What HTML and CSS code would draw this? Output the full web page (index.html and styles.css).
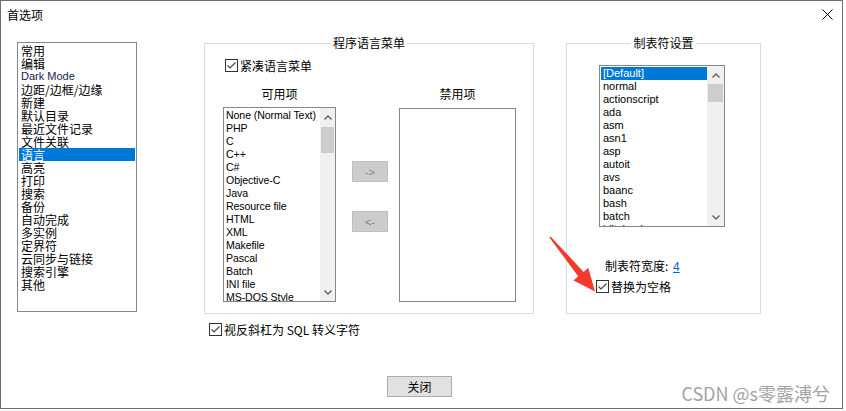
FILE: index.html
```html
<!DOCTYPE html>
<html lang="zh-CN">
<head>
<meta charset="utf-8">
<title>首选项</title>
<link rel="stylesheet" href="styles.css">
</head>
<body>
<div class="window">
  <div class="titlebar">
    <span class="title">首选项</span>
    <svg class="close" width="11" height="11" viewBox="0 0 11 11"><path d="M0.5 0.5 L10.5 10.5 M10.5 0.5 L0.5 10.5" stroke="#000" stroke-width="1"/></svg>
  </div>
  <div class="main">
    <div class="nav">
      <div class="row">常用</div>
      <div class="row">编辑</div>
      <div class="row lat">Dark Mode</div>
      <div class="row">边距/边框/边缘</div>
      <div class="row">新建</div>
      <div class="row">默认目录</div>
      <div class="row">最近文件记录</div>
      <div class="row">文件关联</div>
      <div class="row sel">语言</div>
      <div class="row">高亮</div>
      <div class="row">打印</div>
      <div class="row">搜索</div>
      <div class="row">备份</div>
      <div class="row">自动完成</div>
      <div class="row">多实例</div>
      <div class="row">定界符</div>
      <div class="row">云同步与链接</div>
      <div class="row">搜索引擎</div>
      <div class="row">其他</div>
    </div>

    <div class="midcol">
      <div class="group group-mid">
        <div class="group-title"><span>程序语言菜单</span></div>
        <div class="chk chk-compact">
          <svg class="cb" width="13" height="13" viewBox="0 0 13 13"><rect x="0.5" y="0.5" width="12" height="12" fill="#fff" stroke="#333"/><path d="M2.5 6.5 L5 9 L10.5 3.5" fill="none" stroke="#444" stroke-width="1.2"/></svg>
          <span>紧凑语言菜单</span>
        </div>
        <div class="cols">
          <div class="col col-avail">
            <div class="col-label">可用项</div>
            <div class="list list-avail">
              <div class="items">
                <div class="row">None (Normal Text)</div>
                <div class="row">PHP</div>
                <div class="row">C</div>
                <div class="row">C++</div>
                <div class="row">C#</div>
                <div class="row">Objective-C</div>
                <div class="row">Java</div>
                <div class="row">Resource file</div>
                <div class="row">HTML</div>
                <div class="row">XML</div>
                <div class="row">Makefile</div>
                <div class="row">Pascal</div>
                <div class="row">Batch</div>
                <div class="row">INI file</div>
                <div class="row">MS-DOS Style</div>
              </div>
              <div class="sb sb-narrow">
                <div class="sb-btn"><svg width="8" height="5" viewBox="0 0 8 5"><path d="M0.5 4.5 L4 1 L7.5 4.5" fill="none" stroke="#606060" stroke-width="1.4"/></svg></div>
                <div class="sb-thumb thumb-avail"></div>
                <div class="sb-track"></div>
                <div class="sb-btn"><svg width="8" height="5" viewBox="0 0 8 5"><path d="M0.5 0.5 L4 4 L7.5 0.5" fill="none" stroke="#606060" stroke-width="1.4"/></svg></div>
              </div>
            </div>
          </div>
          <div class="movebtns">
            <div class="mbtn mbtn-right">-&gt;</div>
            <div class="mbtn mbtn-left">&lt;-</div>
          </div>
          <div class="col col-disabled">
            <div class="col-label">禁用项</div>
            <div class="list list-disabled"></div>
          </div>
        </div>
      </div>
      <div class="chk chk-sql">
        <svg class="cb" width="13" height="13" viewBox="0 0 13 13"><rect x="0.5" y="0.5" width="12" height="12" fill="#fff" stroke="#333"/><path d="M2.5 6.5 L5 9 L10.5 3.5" fill="none" stroke="#444" stroke-width="1.2"/></svg>
        <span>视反斜杠为 SQL 转义字符</span>
      </div>
    </div>

    <div class="group group-tab">
      <div class="group-title"><span>制表符设置</span></div>
      <div class="list list-tab">
        <div class="items">
          <div class="row sel">[Default]</div>
          <div class="row">normal</div>
          <div class="row">actionscript</div>
          <div class="row">ada</div>
          <div class="row">asm</div>
          <div class="row">asn1</div>
          <div class="row">asp</div>
          <div class="row">autoit</div>
          <div class="row">avs</div>
          <div class="row">baanc</div>
          <div class="row">bash</div>
          <div class="row">batch</div>
          <div class="row">blitzbasic</div>
        </div>
        <div class="sb">
          <div class="sb-btn"><svg width="8" height="5" viewBox="0 0 8 5"><path d="M0.5 4.5 L4 1 L7.5 4.5" fill="none" stroke="#606060" stroke-width="1.4"/></svg></div>
          <div class="sb-thumb thumb-tab"></div>
          <div class="sb-track"></div>
          <div class="sb-btn"><svg width="8" height="5" viewBox="0 0 8 5"><path d="M0.5 0.5 L4 4 L7.5 0.5" fill="none" stroke="#606060" stroke-width="1.4"/></svg></div>
        </div>
      </div>
      <div class="tabwidth">制表符宽度: <a class="link">4</a></div>
      <div class="chk chk-replace">
        <svg class="cb" width="13" height="13" viewBox="0 0 13 13"><rect x="0.5" y="0.5" width="12" height="12" fill="#fff" stroke="#333"/><path d="M2.5 6.5 L5 9 L10.5 3.5" fill="none" stroke="#444" stroke-width="1.2"/></svg>
        <span>替换为空格</span>
      </div>
    </div>
  </div>
  <div class="footer">
    <div class="btn-close">关闭</div>
  </div>
  <div class="watermark">CSDN @s零露溥兮</div>
  <svg class="annot" width="846" height="411" viewBox="0 0 846 411">
    <polygon points="549.4,237.6 578.2,276.3 573.5,280.4 595,291.5 588.3,267.8 583.6,271.9 550.6,236.4" fill="#f2392c"/>
  </svg>
</div>
</body>
</html>
```

FILE: styles.css
```css
html, body {
  margin: 0;
  padding: 0;
  background: #fff;
}

body {
  font-family: "Liberation Sans", "Noto Sans CJK SC", sans-serif;
  font-size: 12px;
  color: #000;
}

.window {
  position: relative;
  width: 843px;
  height: 409px;
  box-sizing: border-box;
  border: 1px solid #6f6f6f;
  background: #fff;
  display: flex;
  flex-direction: column;
}

.titlebar {
  height: 26px;
  display: flex;
  align-items: center;
  justify-content: space-between;
  padding: 0 9px 0 6px;
}

.title {
  font-family: "Noto Sans CJK SC", sans-serif;
  font-size: 12px;
  line-height: 13px;
}

.main {
  height: 349px;
  box-sizing: border-box;
  display: flex;
  align-items: flex-start;
  padding: 15px 0 0 16px;
}

.row {
  height: 13px;
  line-height: 13px;
  white-space: nowrap;
  padding-left: 2px;
}

.sel {
  background: #0078d7;
  color: #fff;
}

.nav {
  width: 120px;
  height: 270px;
  box-sizing: border-box;
  border: 1px solid #828790;
  padding: 1px;
  font-family: "Noto Sans CJK SC", sans-serif;
  font-size: 12px;
}

.nav .row {
  padding-left: 2px;
}

.nav .lat {
  font-family: "Liberation Sans", sans-serif;
  font-size: 11px;
  color: #1a1a4a;
}

.midcol {
  margin-left: 67px;
  margin-top: 1px;
  display: flex;
  flex-direction: column;
}

.group {
  box-sizing: border-box;
  border: 1px solid #dcdcdc;
}

.group-mid {
  width: 330px;
  height: 271px;
  padding-left: 18px;
}

.group-tab {
  margin-left: 32px;
  margin-top: 1px;
  width: 195px;
  height: 271px;
}

.group-title {
  margin-top: -8px;
  height: 14px;
  line-height: 14px;
  text-align: center;
  font-family: "Noto Sans CJK SC", sans-serif;
  font-size: 12px;
}

.group-mid .group-title {
  margin-left: -18px;
}

.group-title span {
  background: #fff;
  padding: 0 2px;
}

.chk {
  display: flex;
  align-items: center;
  gap: 2px;
  height: 13px;
  font-family: "Noto Sans CJK SC", sans-serif;
  font-size: 12px;
  line-height: 13px;
  white-space: nowrap;
}

.cb {
  flex: none;
  display: block;
}

.chk-compact {
  margin-top: 9px;
  margin-left: 2px;
}

.cols {
  display: flex;
  align-items: flex-start;
  margin-top: 15px;
}

.col-label {
  height: 14px;
  line-height: 14px;
  text-align: center;
  font-family: "Noto Sans CJK SC", sans-serif;
  font-size: 12px;
}

.col-avail {
  width: 113px;
}

.col-disabled {
  width: 117px;
  margin-left: 11px;
}

.list {
  box-sizing: border-box;
  border: 1px solid #828790;
  background: #fff;
  display: flex;
  overflow: hidden;
  font-family: "Liberation Sans", sans-serif;
  font-size: 11px;
}

.items {
  flex: 1;
  overflow: hidden;
  padding: 1px 0 0 1px;
}

.list-avail {
  margin-top: 6px;
  height: 195px;
}

.list-avail .items {
  font-size: 10.6px;
  letter-spacing: -0.1px;
}

.list-avail .row {
  padding-left: 1px;
}

.list-disabled {
  margin-top: 7px;
  height: 194px;
}

.list-tab {
  margin-top: 15px;
  margin-left: 32px;
  width: 126px;
  height: 162px;
}

.sb {
  width: 17px;
  flex: none;
  background: #f0f0f0;
  display: flex;
  flex-direction: column;
}

.sb-narrow {
  width: 15px;
}

.sb-btn {
  height: 18px;
  display: flex;
  align-items: center;
  justify-content: center;
}

.sb-btn svg {
  display: block;
}

.sb-thumb {
  background: #cdcdcd;
  margin: 0 1px;
}

.thumb-avail {
  height: 26px;
  margin-top: 1px;
}

.thumb-tab {
  height: 18px;
}

.sb-track {
  flex: 1;
}

.movebtns {
  margin-left: 16px;
  width: 36px;
  display: flex;
  flex-direction: column;
}

.mbtn {
  box-sizing: border-box;
  height: 21px;
  border: 1px solid #bfbfbf;
  background: #cccccc;
  color: #838383;
  font-family: "Liberation Sans", sans-serif;
  font-size: 11px;
  display: flex;
  align-items: center;
  justify-content: center;
}

.mbtn-right {
  margin-top: 74px;
}

.mbtn-left {
  margin-top: 29px;
}

.chk-sql {
  margin-top: 9px;
  margin-left: 5px;
}

.tabwidth {
  margin-top: 32px;
  margin-left: 38px;
  height: 13px;
  line-height: 13px;
  font-family: "Noto Sans CJK SC", sans-serif;
  font-size: 12px;
}

.link {
  color: #0066cc;
  text-decoration: underline;
  font-family: "Liberation Sans", sans-serif;
  margin-left: 2px;
}

.chk-replace {
  margin-top: 8px;
  margin-left: 29px;
}

.footer {
  display: flex;
  padding-left: 386px;
}

.btn-close {
  box-sizing: border-box;
  width: 65px;
  height: 21px;
  border: 1px solid #adadad;
  background: #e1e1e1;
  font-family: "Noto Sans CJK SC", sans-serif;
  font-size: 12px;
  display: flex;
  align-items: center;
  justify-content: center;
}

.watermark {
  position: absolute;
  right: 12px;
  bottom: 5px;
  font-family: "Noto Sans CJK SC", sans-serif;
  font-size: 18px;
  line-height: 20px;
  color: #a3a3a3;
  white-space: nowrap;
}

.annot {
  position: absolute;
  left: -1px;
  top: -1px;
  pointer-events: none;
}
```
